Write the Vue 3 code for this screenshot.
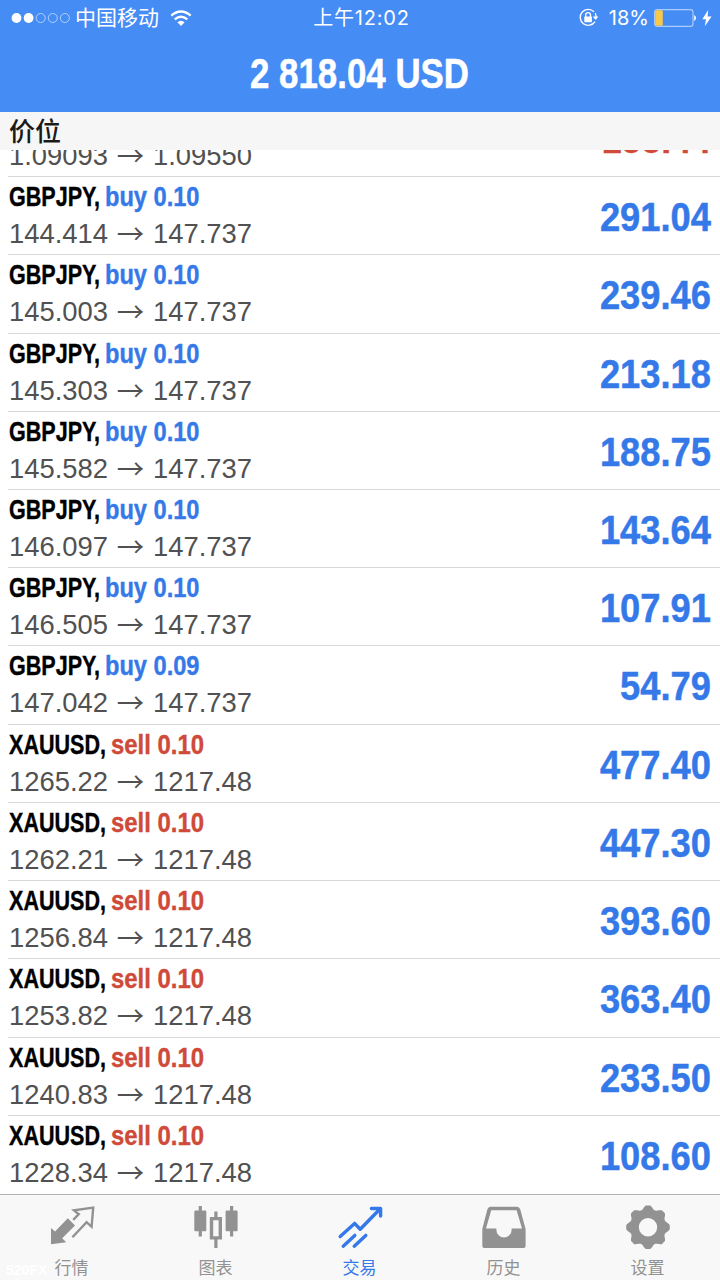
<template>
  <div class="app">
    <header class="top">
      <div class="status">
        <div class="status-left">
          <svg class="signal" width="60" height="12" viewBox="0 0 60 12">
            <circle v-for="n in 5" :key="n" :cx="5.5 + (n - 1) * 12.1" cy="6" :r="n < 3 ? 4.9 : 4.5" :class="n < 3 ? 'dot-on' : 'dot-off'" />
          </svg>
          <span class="carrier">中国移动</span>
          <svg class="wifi" width="22" height="17" viewBox="0 0 22 17">
            <path d="M1.3 5.7 Q11 -2.5 20.7 5.7" />
            <path d="M4.7 9.3 Q11 4 17.3 9.3" />
            <path class="wifi-dot" d="M11 16 L7.4 12.3 Q11 9 14.6 12.3 Z" />
          </svg>
        </div>
        <span class="time">上午12:02</span>
        <div class="status-right">
          <svg class="lock" width="22" height="20" viewBox="0 0 22 20">
            <path class="ring" d="M16 3.8 A8 8 0 1 0 17 13.6 M17.2 5.3 Q18.1 7 18.1 9.5" />
            <path class="fill" d="M14.8 8.4 H20.4 L17.6 12 Z" />
            <rect class="fill" x="6.3" y="8.6" width="7.6" height="5.6" rx="0.6" />
            <path class="shackle" d="M7.7 9 V7 A2.4 2.4 0 0 1 12.5 7 V9" />
          </svg>
          <span class="percent">18%</span>
          <svg class="battery" width="42" height="18" viewBox="0 0 42 18">
            <rect class="shell" x="0.6" y="0.6" width="38.4" height="16.8" rx="2.6" />
            <rect class="level" x="1.2" y="1.2" width="7.6" height="15.6" rx="1.4" />
            <path class="fill" d="M40.2 6 Q42 7 42 9 Q42 11 40.2 12 Z" />
          </svg>
          <svg class="bolt" width="10" height="17" viewBox="0 0 10 17">
            <path d="M6.2 0 L0.3 9.3 H4 L2.8 16.2 L9.6 6.6 H5.6 Z" />
          </svg>
        </div>
      </div>
      <h1 class="balance">
        <svg width="220" height="48">
          <text x="0" y="38" textLength="219" lengthAdjust="spacingAndGlyphs">2 818.04 USD</text>
        </svg>
      </h1>
    </header>

    <div class="section-title">价位</div>

    <main class="list">
      <div v-for="(item, i) in positions" :key="i" class="row">
        <div class="info">
          <div class="deal">
            <svg class="symbol" :width="symbolWidth[item.symbol] + 4" height="32">
              <text x="0" y="24" :textLength="symbolWidth[item.symbol]" lengthAdjust="spacingAndGlyphs">{{ item.symbol }},</text>
            </svg>
            <svg :class="item.side" width="100" height="32">
              <text x="0" y="24" :textLength="item.side === 'buy' ? 94.5 : 93" lengthAdjust="spacingAndGlyphs">{{ item.side }} {{ item.volume }}</text>
            </svg>
          </div>
          <div class="prices">
            <span>{{ item.open }}</span>
            <span class="arrow">→</span>
            <span>{{ item.current }}</span>
          </div>
        </div>
        <svg class="profit" :class="{ loss: item.loss }" width="130" height="48">
          <text :x="130 - profitWidth(item.profit)" y="38" :textLength="profitWidth(item.profit)" lengthAdjust="spacingAndGlyphs">{{ item.profit }}</text>
        </svg>
      </div>
    </main>

    <nav class="tabs">
      <div class="watermark">520FX</div>
      <div class="tab">
        <svg width="48" height="46" viewBox="0 0 48 46">
          <path class="solid" d="M19.8 12.3 L27 19.5 L14.2 32.2 L18.2 36.2 L3 38.3 V22.1 L7 25.4 Z" />
          <path class="line" d="M25.2 13.8 L30.8 8.2 L26 4.4 L45.2 1.6 L43.6 20.8 L38.6 16.2 L24.4 31.2" />
        </svg>
        <span>行情</span>
      </div>
      <div class="tab">
        <svg width="48" height="46" viewBox="0 0 48 46">
          <path class="solid" d="M6.7 0 H9.9 V4.6 H13.3 Q14.3 4.6 14.3 5.6 V24.2 Q14.3 25.2 13.3 25.2 H9.9 V30.4 H6.7 V25.2 H3.3 Q2.3 25.2 2.3 24.2 V5.6 Q2.3 4.6 3.3 4.6 H6.7 Z" />
          <path class="solid" d="M38 0 H41.2 V4.6 H44.6 Q45.6 4.6 45.6 5.6 V24.2 Q45.6 25.2 44.6 25.2 H41.2 V30.4 H38 V25.2 H34.6 Q33.6 25.2 33.6 24.2 V5.6 Q33.6 4.6 34.6 4.6 H38 Z" />
          <path class="solid" fill-rule="evenodd" d="M22.3 5.4 H25.5 V11 H30 V33.4 H25.5 V42 H22.3 V33.4 H17.8 V11 H22.3 Z M21.2 14.3 V30.2 H26.6 V14.3 Z" />
        </svg>
        <span>图表</span>
      </div>
      <div class="tab active">
        <svg width="48" height="46" viewBox="0 0 48 46">
          <path class="trend" d="M4.2 30.5 L18.6 17.4 L24.2 23.2 L43.5 3.5 M35.4 2.5 H44.6 V10" />
          <path class="trend" d="M7.2 40.2 L18.8 29.4 M18.2 40.2 L29.8 29.4" />
        </svg>
        <span>交易</span>
      </div>
      <div class="tab">
        <svg width="48" height="46" viewBox="0 0 48 46">
          <path class="solid" fill-rule="evenodd" d="M10.5 0.7 H37 Q39.3 0.7 40.2 3.2 L45.6 23 V39.4 Q45.6 42 43 42 H5 Q2.3 42 2.3 39.4 V23 L7.4 3.2 Q8.2 0.7 10.5 0.7 Z M11.2 4.2 L6 22.6 H16.4 V24 A7.6 7.6 0 0 0 31.6 24 V22.6 H42 L36.6 4.2 Z" />
        </svg>
        <span>历史</span>
      </div>
      <div class="tab">
        <svg width="48" height="46" viewBox="0 0 48 46">
          <path class="solid" fill-rule="evenodd" :d="gearPath" />
        </svg>
        <span>设置</span>
      </div>
    </nav>
  </div>
</template>

<script setup>
const symbolWidth = { EURUSD: 96, GBPJPY: 91, XAUUSD: 97 }

const positions = [
  { symbol: 'EURUSD', side: 'sell', volume: '0.34', open: '1.09093', current: '1.09550', profit: '-155.44', loss: true },
  { symbol: 'GBPJPY', side: 'buy', volume: '0.10', open: '144.414', current: '147.737', profit: '291.04' },
  { symbol: 'GBPJPY', side: 'buy', volume: '0.10', open: '145.003', current: '147.737', profit: '239.46' },
  { symbol: 'GBPJPY', side: 'buy', volume: '0.10', open: '145.303', current: '147.737', profit: '213.18' },
  { symbol: 'GBPJPY', side: 'buy', volume: '0.10', open: '145.582', current: '147.737', profit: '188.75' },
  { symbol: 'GBPJPY', side: 'buy', volume: '0.10', open: '146.097', current: '147.737', profit: '143.64' },
  { symbol: 'GBPJPY', side: 'buy', volume: '0.10', open: '146.505', current: '147.737', profit: '107.91' },
  { symbol: 'GBPJPY', side: 'buy', volume: '0.09', open: '147.042', current: '147.737', profit: '54.79' },
  { symbol: 'XAUUSD', side: 'sell', volume: '0.10', open: '1265.22', current: '1217.48', profit: '477.40' },
  { symbol: 'XAUUSD', side: 'sell', volume: '0.10', open: '1262.21', current: '1217.48', profit: '447.30' },
  { symbol: 'XAUUSD', side: 'sell', volume: '0.10', open: '1256.84', current: '1217.48', profit: '393.60' },
  { symbol: 'XAUUSD', side: 'sell', volume: '0.10', open: '1253.82', current: '1217.48', profit: '363.40' },
  { symbol: 'XAUUSD', side: 'sell', volume: '0.10', open: '1240.83', current: '1217.48', profit: '233.50' },
  { symbol: 'XAUUSD', side: 'sell', volume: '0.10', open: '1228.34', current: '1217.48', profit: '108.60' }
]

// digits are 20.2px wide, dot and minus are half of that
const profitWidth = (value) => {
  const digits = value.replace(/\D/g, '').length
  return digits * 20.2 + (value.length - digits) * 10.1
}

// gear with 8 rounded teeth and a round hole
const buildGear = () => {
  const points = []
  for (let i = 0; i < 120; i++) {
    const a = (i / 120) * Math.PI * 2
    const wave = Math.max(-1, Math.min(1, Math.cos(a * 8) * 1.3 + 0.2))
    const r = 20 + wave * 1.8
    points.push(`${(24 + r * Math.cos(a)).toFixed(2)} ${(21.2 + r * Math.sin(a)).toFixed(2)}`)
  }
  return `M${points.join(' L')} Z M33.2 21.2 A9.2 9.2 0 1 0 14.8 21.2 A9.2 9.2 0 1 0 33.2 21.2 Z`
}
const gearPath = buildGear()
</script>

<style>
body {
  margin: 0;
  background: #fff;
}
</style>

<style scoped>
.app {
  width: 720px;
  height: 1280px;
  display: flex;
  flex-direction: column;
  overflow: hidden;
  background: #fff;
  font-family: "Liberation Sans", "Noto Sans CJK SC", sans-serif;
}

svg {
  display: block;
  flex: none;
  overflow: visible;
}

.top {
  flex: none;
  height: 111.5px;
  background: #468cf5;
  color: #fff;
}

.status {
  display: grid;
  grid-template-columns: 1fr auto 1fr;
  align-items: center;
  height: 36px;
  padding: 0 8px 0 11px;
  font-family: Inter, "Noto Sans CJK SC", sans-serif;
  font-size: 20px;
  line-height: 34px;
}

.status-left,
.status-right {
  display: flex;
  align-items: center;
}

.status-right {
  justify-content: flex-end;
}

.dot-on,
.fill,
.wifi-dot,
.bolt {
  fill: #fff;
}

.dot-off {
  fill: none;
  stroke: #b9d6fd;
  stroke-width: 0.9;
}

.carrier {
  margin-left: 4px;
  font-size: 21px;
}

.wifi {
  margin-left: 11px;
}

.wifi path {
  fill: none;
  stroke: #fff;
  stroke-width: 2.4;
}

.wifi .wifi-dot {
  fill: #fff;
  stroke: none;
}

.time {
  letter-spacing: 0.8px;
  white-space: nowrap;
}

.lock {
  margin-right: 9px;
}

.ring,
.shackle {
  fill: none;
  stroke: #fff;
  stroke-width: 1.3;
}

.percent {
  margin-right: 5px;
}

.shell {
  fill: none;
  stroke: #a9ccfc;
  stroke-width: 1.2;
}

.level {
  fill: #f8c84c;
}

.bolt {
  margin-left: 6px;
}

.balance {
  display: flex;
  justify-content: center;
  margin: 14px 0 0;
  font-size: 42px;
}

.balance text {
  fill: #fff;
  stroke: #fff;
  stroke-width: 0.5;
  font-weight: bold;
}

.section-title {
  flex: none;
  height: 38px;
  padding-left: 9px;
  background: #f6f6f6;
  color: #1a1a1a;
  font-size: 26px;
  font-weight: 500;
  line-height: 40px;
}

.list {
  flex: 1;
  min-height: 0;
  display: flex;
  flex-direction: column;
  justify-content: flex-end;
  overflow: hidden;
}

.row {
  flex: none;
  display: flex;
  justify-content: space-between;
  box-sizing: border-box;
  height: 78.23px;
  margin-left: 8px;
  padding: 5px 9px 0 1px;
  border-bottom: 1px solid #d8d8da;
}

.row:last-child {
  border-bottom-color: transparent;
}

.deal {
  display: flex;
  gap: 1px;
  height: 31px;
  font-size: 28px;
  font-weight: bold;
}

.deal svg {
  stroke-width: 0.4;
}

.symbol {
  fill: #000;
  stroke: #000;
}

.buy {
  fill: #3579e8;
  stroke: #3579e8;
}

.sell {
  fill: #cf4a38;
  stroke: #cf4a38;
}

.prices {
  display: flex;
  align-items: center;
  height: 42px;
  color: #515151;
  font-size: 27.4px;
  line-height: 32px;
}

.arrow {
  width: 45px;
  margin-top: -4px;
  font-family: "Noto Sans CJK SC", sans-serif;
  text-align: center;
}

.profit {
  margin-top: 11px;
  fill: #3579e8;
  stroke: #3579e8;
  stroke-width: 0.5;
  font-size: 41.5px;
  font-weight: bold;
}

.profit.loss {
  fill: #cf4a38;
  stroke: #cf4a38;
}

.tabs {
  position: relative;
  flex: none;
  display: grid;
  grid-template-columns: repeat(5, 1fr);
  box-sizing: border-box;
  height: 86px;
  padding-top: 11px;
  border-top: 1px solid #b2b2b2;
  background: #f8f8f8;
}

.tab {
  display: flex;
  flex-direction: column;
  align-items: center;
  margin-left: -1px;
  color: #929292;
  font-size: 17px;
  line-height: 33px;
}

.tab.active {
  color: #3579e8;
}

.solid {
  fill: currentColor;
}

.line {
  fill: none;
  stroke: currentColor;
  stroke-width: 2.4;
}

.trend {
  fill: none;
  stroke: currentColor;
  stroke-width: 3.4;
  stroke-linecap: round;
  stroke-linejoin: round;
}

.watermark {
  position: absolute;
  left: 6px;
  bottom: 1px;
  color: #fff;
  font-size: 14px;
  font-weight: bold;
  line-height: 18px;
}
</style>
